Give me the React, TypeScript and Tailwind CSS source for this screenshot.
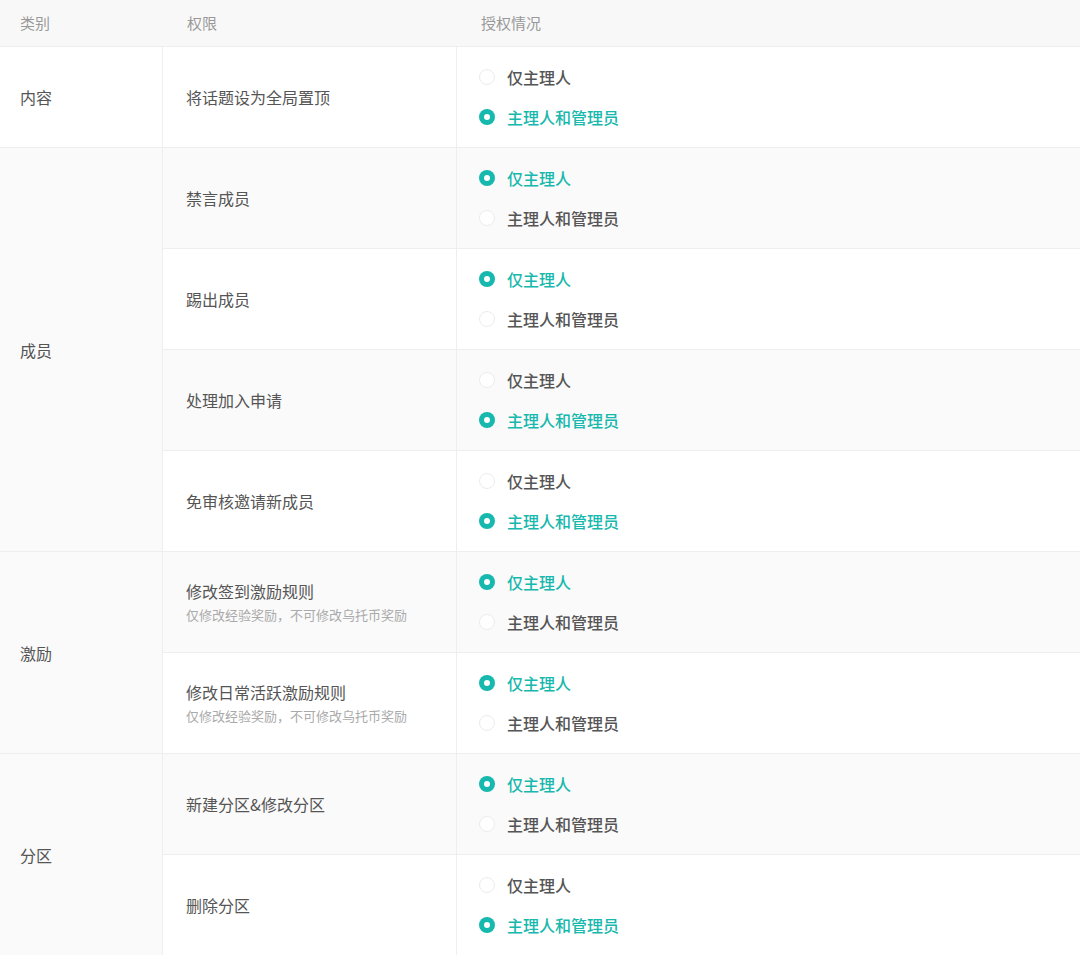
const groups = [
  { cat: "内容", gray: false, rows: [{ t: "将话题设为全局置顶", sel: 1 }] },
  { cat: "成员", gray: true, rows: [
    { t: "禁言成员", sel: 0 }, { t: "踢出成员", sel: 0 }, { t: "处理加入申请", sel: 1 }, { t: "免审核邀请新成员", sel: 1 },
  ] },
  { cat: "激励", gray: true, rows: [
    { t: "修改签到激励规则", s: "仅修改经验奖励，不可修改乌托币奖励", sel: 0 },
    { t: "修改日常活跃激励规则", s: "仅修改经验奖励，不可修改乌托币奖励", sel: 0 },
  ] },
  { cat: "分区", gray: true, rows: [{ t: "新建分区&修改分区", sel: 0 }, { t: "删除分区", sel: 1 }] },
];

function Radio({ on, label }: { on: boolean; label: string }) {
  return (
    <div className="flex items-center h-[20px]">
      {on ? (
        <span className="w-[16px] h-[16px] rounded-full bg-[#17b8ad] flex items-center justify-center">
          <span className="w-[6px] h-[6px] rounded-full bg-white" />
        </span>
      ) : (
        <span className="w-[16px] h-[16px] rounded-full border border-[#ececec] bg-white" />
      )}
      <span className={`ml-[12px] text-[16px] font-medium ${on ? "text-[#17b8ad]" : "text-[#555]"}`}>{label}</span>
    </div>
  );
}

export default function App() {
  let idx = 0;
  return (
    <div className="w-[1080px] h-[955px] overflow-hidden bg-white text-[#555]" style={{ fontFamily: '"Noto Sans CJK SC", "Noto Sans", sans-serif' }}>
      <div className="flex h-[47px] bg-[#f8f8f8] border-b border-[#eee] text-[15px] text-[#999] items-center">
        <div className="w-[163px] pl-[20px]">类别</div>
        <div className="w-[294px] pl-[24px]">权限</div>
        <div className="pl-[24px]">授权情况</div>
      </div>
      {groups.map((g) => (
        <div key={g.cat} className="flex border-b border-[#eee]">
          <div className={`w-[163px] shrink-0 border-r border-[#eee] flex items-center pl-[20px] text-[16px] ${g.gray ? "bg-[#fafafa]" : "bg-white"}`}>{g.cat}</div>
          <div className="flex-1 flex flex-col">
            {g.rows.map((r, i) => {
              const bg = idx++ % 2 === 0 ? "bg-white" : "bg-[#fafafa]";
              return (
                <div key={r.t} className={`flex h-[100px] ${bg} ${i < g.rows.length - 1 ? "border-b border-[#eee] h-[101px]" : ""}`}>
                  <div className="w-[294px] shrink-0 border-r border-[#eee] pl-[23px] flex flex-col justify-center">
                    <div className="text-[16px] leading-[24px]">{r.t}</div>
                    {r.s && <div className="text-[13px] text-[#aaa] leading-[20px] mt-[2px]">{r.s}</div>}
                  </div>
                  <div className="pl-[22px] flex flex-col justify-center gap-[20px]">
                    <Radio on={r.sel === 0} label="仅主理人" />
                    <Radio on={r.sel === 1} label="主理人和管理员" />
                  </div>
                </div>
              );
            })}
          </div>
        </div>
      ))}
    </div>
  );
}
